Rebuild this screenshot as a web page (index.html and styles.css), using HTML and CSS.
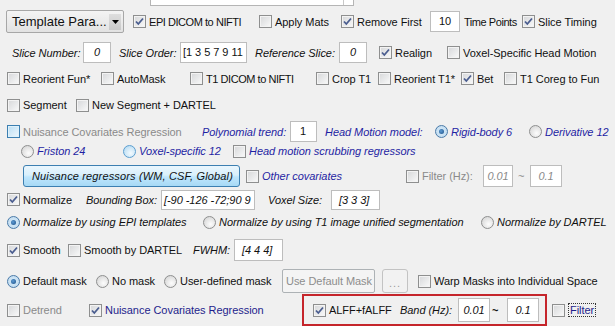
FILE: index.html
```html
<!DOCTYPE html>
<html>
<head>
<meta charset="utf-8">
<link rel="stylesheet" href="styles.css">
</head>
<body>
<div class="panel">
  <div class="topbox"><span class="topbox-btn"></span></div>

  <div class="row r1">
    <div class="combo"><span class="combo-text">Template Para...</span><span class="combo-arrow"><svg width="7" height="4" viewBox="0 0 7 4"><path d="M0 0H7L3.5 4Z" fill="#000"/></svg></span></div>
    <label class="item"><span class="cb on"><svg viewBox="0 0 11 11"><path d="M2 5.5L4.3 8L9 2.5" fill="none" stroke="#4a5d8f" stroke-width="1.8"/></svg></span><span class="narrow">EPI DICOM to NIFTI</span></label>
    <label class="item"><span class="cb"></span>Apply Mats</label>
    <label class="item"><span class="cb on"><svg viewBox="0 0 11 11"><path d="M2 5.5L4.3 8L9 2.5" fill="none" stroke="#4a5d8f" stroke-width="1.8"/></svg></span>Remove First</label>
    <span class="tf tc w30">10</span>
    <span class="lbl narrow">Time Points</span>
    <label class="item"><span class="cb on"><svg viewBox="0 0 11 11"><path d="M2 5.5L4.3 8L9 2.5" fill="none" stroke="#4a5d8f" stroke-width="1.8"/></svg></span>Slice Timing</label>
  </div>

  <div class="row r2">
    <span class="lbl it">Slice Number:</span>
    <span class="tf tc it w28">0</span>
    <span class="lbl it">Slice Order:</span>
    <span class="tf tl w67">[1 3 5 7 9 11</span>
    <span class="lbl it">Reference Slice:</span>
    <span class="tf tc it w28">0</span>
    <label class="item"><span class="cb on"><svg viewBox="0 0 11 11"><path d="M2 5.5L4.3 8L9 2.5" fill="none" stroke="#4a5d8f" stroke-width="1.8"/></svg></span>Realign</label>
    <label class="item"><span class="cb"></span>Voxel-Specific Head Motion</label>
  </div>

  <div class="row r3">
    <label class="item"><span class="cb"></span>Reorient Fun*</label>
    <label class="item"><span class="cb"></span>AutoMask</label>
    <label class="item"><span class="cb"></span><span class="narrow">T1 DICOM to NIFTI</span></label>
    <label class="item"><span class="cb"></span>Crop T1</label>
    <label class="item"><span class="cb"></span>Reorient T1*</label>
    <label class="item"><span class="cb on"><svg viewBox="0 0 11 11"><path d="M2 5.5L4.3 8L9 2.5" fill="none" stroke="#4a5d8f" stroke-width="1.8"/></svg></span>Bet</label>
    <label class="item"><span class="cb"></span>T1 Coreg to Fun</label>
  </div>

  <div class="row r4">
    <label class="item"><span class="cb"></span>Segment</label>
    <label class="item"><span class="cb"></span>New Segment + DARTEL</label>
  </div>

  <div class="row r5">
    <label class="item grey"><span class="cb hover"></span>Nuisance Covariates Regression</label>
    <span class="lbl it blue">Polynomial trend:</span>
    <span class="tf tl w27">1</span>
    <span class="lbl it blue">Head Motion model:</span>
    <label class="item it blue"><span class="rb on"></span>Rigid-body 6</label>
    <label class="item it blue"><span class="rb"></span>Derivative 12</label>
  </div>

  <div class="row r6">
    <label class="item it blue"><span class="rb"></span>Friston 24</label>
    <label class="item it blue"><span class="rb hover"></span>Voxel-specific 12</label>
    <label class="item it blue"><span class="cb"></span>Head motion scrubbing regressors</label>
  </div>

  <div class="row r7">
    <span class="btn-blue">Nuisance regressors (WM, CSF, Global)</span>
    <label class="item it blue"><span class="cb"></span>Other covariates</label>
    <label class="item grey"><span class="cb"></span>Filter (Hz):</label>
    <span class="tf tc it grey w30 h22">0.01</span>
    <span class="tilde grey">~</span>
    <span class="tf tc it grey w32 h22">0.1</span>
  </div>

  <div class="row r8">
    <label class="item"><span class="cb on"><svg viewBox="0 0 11 11"><path d="M2 5.5L4.3 8L9 2.5" fill="none" stroke="#4a5d8f" stroke-width="1.8"/></svg></span>Normalize</label>
    <span class="lbl it">Bounding Box:</span>
    <span class="tf tl it w94 h20">[-90 -126 -72;90 9</span>
    <span class="lbl it">Voxel Size:</span>
    <span class="tf tl it w49 h20 pad7">[3 3 3]</span>
  </div>

  <div class="row r9">
    <label class="item it"><span class="rb on"></span>Normalize by using EPI templates</label>
    <label class="item it"><span class="rb"></span>Normalize by using T1 image unified segmentation</label>
    <label class="item it"><span class="rb"></span>Normalize by DARTEL</label>
  </div>

  <div class="row r10">
    <label class="item"><span class="cb on"><svg viewBox="0 0 11 11"><path d="M2 5.5L4.3 8L9 2.5" fill="none" stroke="#4a5d8f" stroke-width="1.8"/></svg></span>Smooth</label>
    <label class="item"><span class="cb"></span>Smooth by DARTEL</label>
    <span class="lbl it">FWHM:</span>
    <span class="tf tl it w49 h22 pad7">[4 4 4]</span>
  </div>

  <div class="row r11">
    <label class="item"><span class="rb on"></span>Default mask</label>
    <label class="item"><span class="rb"></span>No mask</label>
    <label class="item"><span class="rb"></span>User-defined mask</label>
    <span class="btn-dis">Use Default Mask</span>
    <span class="btn-dots">...</span>
    <label class="item"><span class="cb"></span>Warp Masks into Individual Space</label>
  </div>

  <div class="row r12">
    <label class="item grey"><span class="cb"></span>Detrend</label>
    <label class="item navy"><span class="cb on"><svg viewBox="0 0 11 11"><path d="M2 5.5L4.3 8L9 2.5" fill="none" stroke="#4a5d8f" stroke-width="1.8"/></svg></span>Nuisance Covariates Regression</label>
    <div class="redbox">
      <label class="item"><span class="cb on"><svg viewBox="0 0 11 11"><path d="M2 5.5L4.3 8L9 2.5" fill="none" stroke="#4a5d8f" stroke-width="1.8"/></svg></span>ALFF+fALFF</label>
      <span class="lbl it">Band (Hz):</span>
      <span class="tf tc it w32 h23">0.01</span>
      <span class="tilde bold">~</span>
      <span class="tf tc it w32 h23">0.1</span>
    </div>
    <label class="item navy"><span class="cb"></span><span class="focus">Filter</span></label>
  </div>
</div>
</body>
</html>
```

FILE: styles.css
```css
* { box-sizing: border-box; }
html, body { margin: 0; padding: 0; }
body {
  width: 615px;
  height: 326px;
  overflow: hidden;
  background: #f0f0f0;
  font-family: "Liberation Sans", Arial, sans-serif;
  font-size: 11px;
  letter-spacing: -0.05px;
  color: #111;
}
.panel { width: 615px; height: 326px; }

.topbox {
  margin-left: 150px;
  width: 204px;
  height: 6px;
  background: #fff;
  border: 1px solid #b5b5b5;
  border-top: 0;
  position: relative;
}
.topbox-btn {
  position: absolute;
  left: 192px;
  top: 0;
  height: 5px;
  width: 1px;
  background: #c8c8c8;
}

.row {
  display: grid;
  align-items: center;
  white-space: nowrap;
}
.r1 { height: 31px; padding-left: 6px; grid-template-columns: 127px 126px 82px 89px 34px 58px auto; }
.r2 { height: 31px; padding-left: 12px; grid-template-columns: 71px 36px 61px 75px 84px 40px 68px auto; }
.r3 { height: 21px; padding-left: 7px; grid-template-columns: 94px 89px 126px 62px 83px 43px auto; }
.r4 { height: 32px; padding-left: 7px; grid-template-columns: 69px auto; }
.r5 { height: 16px; padding-left: 7px; grid-template-columns: 195px 88px 35px 110px 94px auto; }
.r6 { height: 28px; padding-left: 21px; grid-template-columns: 102px 110px auto; }
.r7 { height: 22px; padding-left: 23px; grid-template-columns: 223px 160px 77px 35px 12px auto; }
.r8 { height: 25px; padding-left: 7px; grid-template-columns: 79px 75px 107px 63px auto; }
.r9 { height: 20px; padding-left: 7px; grid-template-columns: 196px 278px auto; }
.r10 { height: 36px; padding-left: 7px; grid-template-columns: 61px 125px 41px auto; }
.r11 { height: 26px; padding-left: 7px; grid-template-columns: 89px 68px 118px 100px 36px auto; }
.r12 { height: 32px; padding-left: 7px; grid-template-columns: 82px 213px 250px auto; }

.item { display: flex; align-items: center; gap: 3px; }
.lbl { display: block; }
.narrow { letter-spacing: -0.45px; }
.it { font-style: italic; }
.blue { color: #1f1fa3; }
.navy { color: #1e1e8c; }
.grey { color: #8a8a8a; }
.bold { font-weight: bold; }

/* checkbox */
.cb {
  flex: none;
  width: 13px;
  height: 13px;
  border: 1px solid #8e8f8f;
  background: linear-gradient(135deg, #d6d7d9 0%, #e9eaeb 55%, #fafafa 100%);
  box-shadow: inset 0 0 0 1px #f3f3f3;
  display: flex;
  align-items: center;
  justify-content: center;
}
.cb svg { width: 11px; height: 11px; display: block; }
.cb.hover {
  border-color: #3c7fb1;
  background: linear-gradient(135deg, #b9def4 0%, #d7ecf9 55%, #eef7fd 100%);
  box-shadow: inset 0 0 0 1px #def1fb;
}

/* radio */
.rb {
  flex: none;
  width: 13px;
  height: 13px;
  border-radius: 50%;
  border: 1px solid #8e8f8f;
  background: radial-gradient(circle at 60% 65%, #fdfdfd 0%, #e6e6e6 50%, #cfcfcf 100%);
  display: flex;
  align-items: center;
  justify-content: center;
}
.rb.hover {
  border-color: #5c9fd0;
  background: radial-gradient(circle at 60% 65%, #f3fafe 0%, #cde7f7 55%, #a9d3ef 100%);
}
.rb.on {
  border-color: #4a7aa8;
  background: radial-gradient(circle at 50% 50%, #d9ecf9 0%, #bcd8ee 100%);
}
.rb.on::after {
  content: "";
  width: 5px;
  height: 5px;
  border-radius: 50%;
  background: radial-gradient(circle at 40% 40%, #5d9ad3 0%, #1b4f86 100%);
}

/* text field */
.tf {
  display: block;
  height: 21px;
  line-height: 19px;
  background: #fff;
  border: 1px solid #bdbdbd;
  overflow: hidden;
  white-space: nowrap;
}
.tc { text-align: center; }
.tl { text-align: left; padding-left: 2px; }
.pad7 { padding-left: 7px; }
.w27 { width: 27px; padding-left: 9px; }
.w28 { width: 28px; }
.w30 { width: 30px; }
.w32 { width: 32px; }
.w49 { width: 49px; }
.w67 { width: 67px; }
.w94 { width: 94px; }
.h20 { height: 20px; line-height: 18px; }
.h22 { height: 22px; line-height: 20px; }
.h23 { height: 24px; line-height: 22px; }

.tilde { display: block; font-size: 11px; }

/* combo */
.combo {
  width: 118px;
  height: 23px;
  border: 1px solid #a7a7a7;
  border-radius: 2px;
  background: linear-gradient(#f4f4f4, #e2e2e2);
  display: flex;
  align-items: center;
  justify-content: space-between;
  padding: 0 2px 0 5px;
  font-size: 13px;
  letter-spacing: 0;
}
.combo-arrow {
  width: 12px;
  height: 16px;
  background: linear-gradient(#dedede, #c9c9c9);
  display: flex;
  align-items: center;
  justify-content: center;
}

/* buttons */
.btn-blue {
  display: block;
  width: 217px;
  height: 22px;
  line-height: 20px;
  border: 1px solid #3c7fb1;
  border-radius: 3px;
  background: linear-gradient(#eaf6fd 0%, #d9f0fc 45%, #bee6fd 55%, #a7d9f5 100%);
  font-style: italic;
  letter-spacing: 0.15px;
  padding-left: 8px;
  color: #111;
}
.btn-dis {
  display: block;
  width: 93px;
  height: 24px;
  line-height: 22px;
  border: 1px solid #adb2b5;
  border-radius: 2px;
  background: #f4f4f4;
  color: #8d8d8d;
  padding-left: 3px;
  overflow: hidden;
}
.btn-dots {
  display: block;
  width: 26px;
  height: 24px;
  line-height: 26px;
  border: 1px solid #c3c3c3;
  border-radius: 3px;
  background: #f2f2f2;
  color: #9a9a9a;
  text-align: center;
  letter-spacing: 1px;
}

/* red highlight box */
.redbox {
  width: 245px;
  height: 32px;
  border: 2px solid #c5252b;
  display: grid;
  align-items: center;
  padding-left: 9px;
  grid-template-columns: 87px 58px 34px 15px auto;
}
.focus { border: 1px dotted #333; padding: 0 1px; line-height: 12px; }
```
